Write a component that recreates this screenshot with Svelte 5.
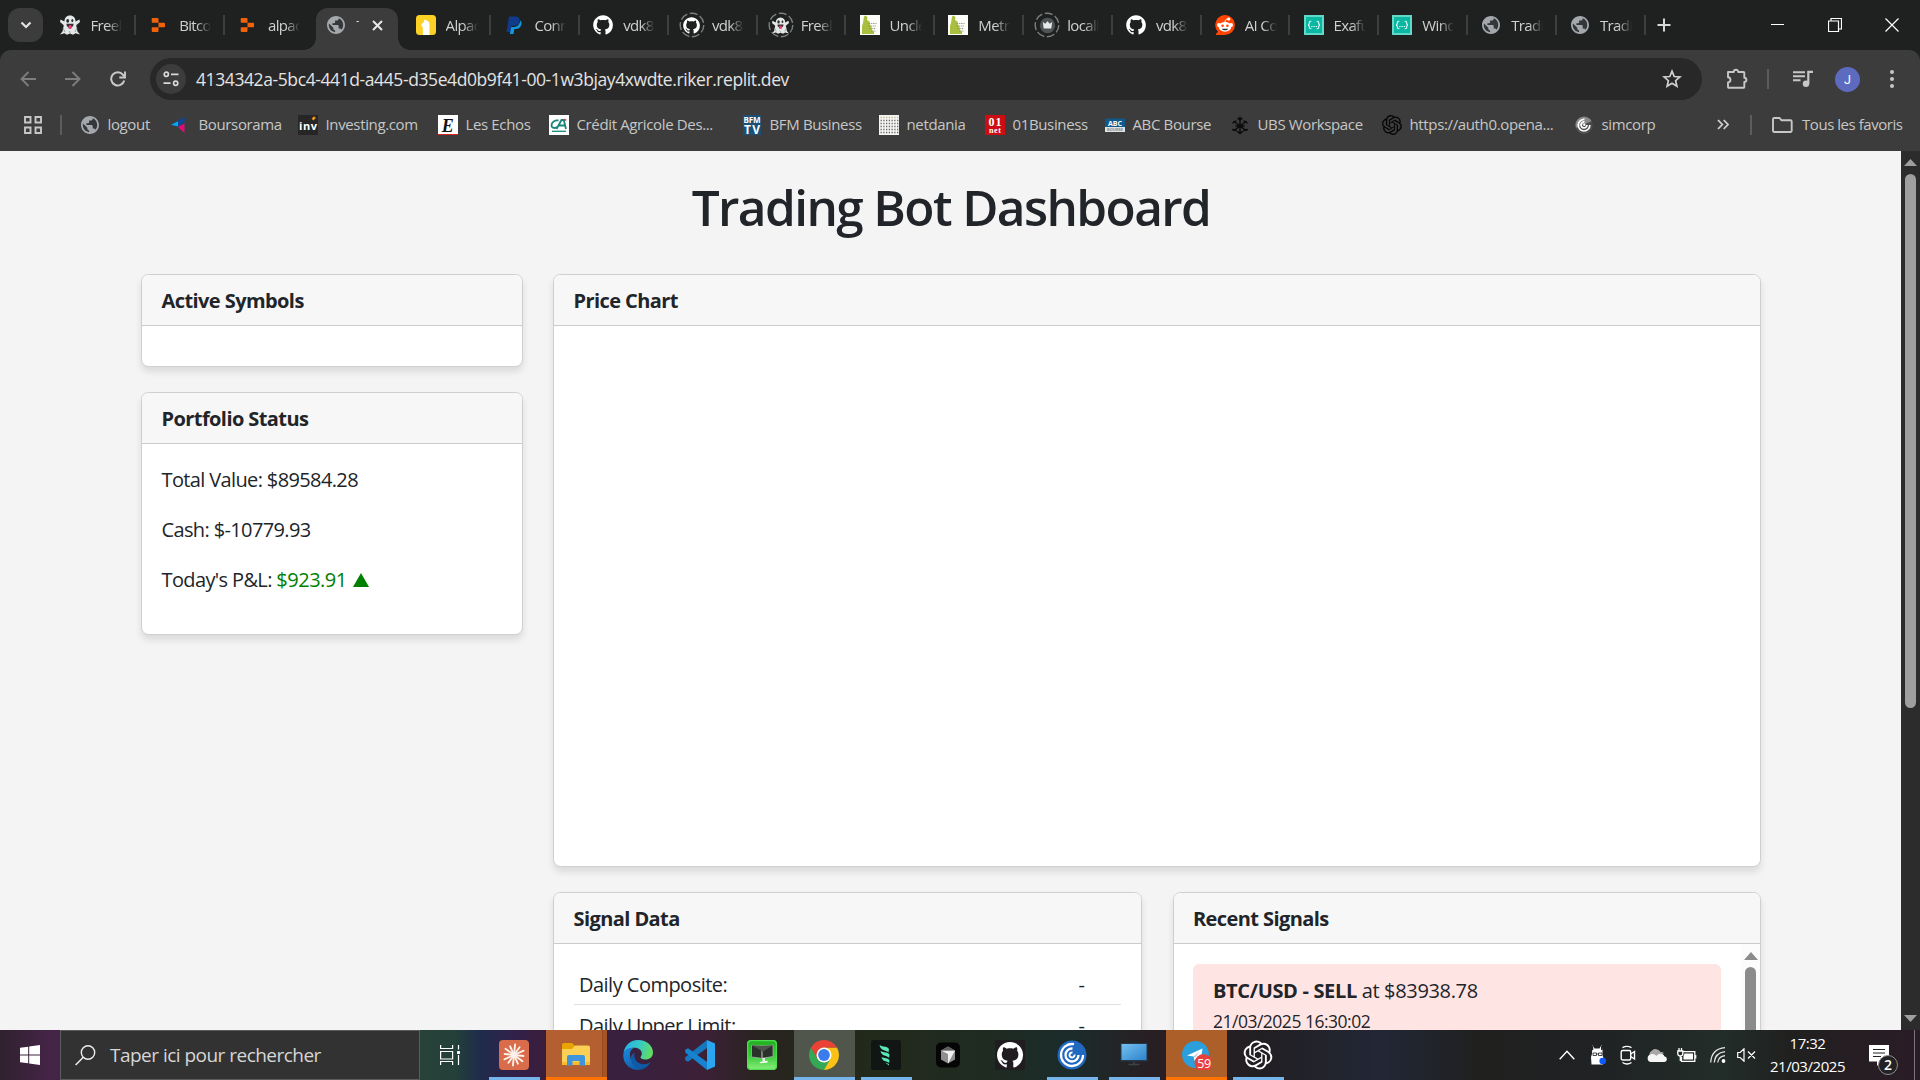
<script>
  const tabs = [
    { icon: 'ghost', label: 'Freela' },
    { icon: 'replit', label: 'Bitcoi' },
    { icon: 'replit', label: 'alpaca' },
    { icon: 'globe', label: 'T', active: true },
    { icon: 'alpaca', label: 'Alpac' },
    { icon: 'paypal', label: 'Conne' },
    { icon: 'github', label: 'vdk88' },
    { icon: 'github', label: 'vdk88', ring: true },
    { icon: 'ghost', label: 'Freela', ring: true },
    { icon: 'statue', label: 'Uncle' },
    { icon: 'statue', label: 'Metro' },
    { icon: 'crown', label: 'locall', ring: true },
    { icon: 'github', label: 'vdk88' },
    { icon: 'reddit', label: 'AI Co' },
    { icon: 'braces', label: 'Exafu' },
    { icon: 'braces', label: 'Windo' },
    { icon: 'globe', label: 'Tradin' },
    { icon: 'globe', label: 'Tradi' }
  ];

  // w: distance from one bookmark's icon to the next one's
  const bookmarks = [
    { icon: 'globe', label: 'logout', w: 91 },
    { icon: 'bourso', label: 'Boursorama', w: 127 },
    { icon: 'inv', label: 'Investing.com', w: 140 },
    { icon: 'echos', label: 'Les Echos', w: 111 },
    { icon: 'ca', label: 'Crédit Agricole Des...', w: 193 },
    { icon: 'bfm', label: 'BFM Business', w: 137 },
    { icon: 'dots', label: 'netdania', w: 106 },
    { icon: 'net01', label: '01Business', w: 120 },
    { icon: 'abc', label: 'ABC Bourse', w: 125 },
    { icon: 'ubs', label: 'UBS Workspace', w: 152 },
    { icon: 'openai', label: 'https://auth0.opena...', w: 192 },
    { icon: 'citrixgray', label: 'simcorp', w: 90 }
  ];

  const tasks = [
    { icon: 'claude', open: true },
    { icon: 'folder', alert: true, stacked: true },
    { icon: 'edge' },
    { icon: 'vscode' },
    { icon: 'remote' },
    { icon: 'chrome', current: true },
    { icon: 'feather', open: true },
    { icon: 'cursor' },
    { icon: 'githubdesk' },
    { icon: 'citrix', open: true },
    { icon: 'monitor', open: true },
    { icon: 'telegram', alert: true },
    { icon: 'openaiw', open: true }
  ];

  const signalRows = [
    { name: 'Daily Composite:', value: '-' },
    { name: 'Daily Upper Limit:', value: '-' }
  ];
</script>

{#snippet githubMark()}
  <path d="M8 0C3.58 0 0 3.58 0 8c0 3.54 2.29 6.53 5.47 7.59.4.07.55-.17.55-.38 0-.19-.01-.82-.01-1.49-2.01.37-2.53-.49-2.69-.94-.09-.23-.48-.94-.82-1.13-.28-.15-.68-.52-.01-.53.63-.01 1.08.58 1.23.82.72 1.21 1.87.87 2.33.66.07-.52.28-.87.51-1.07-1.78-.2-3.64-.89-3.64-3.95 0-.87.31-1.59.82-2.15-.08-.2-.36-1.02.08-2.12 0 0 .67-.21 2.2.82.64-.18 1.32-.27 2-.27.68 0 1.36.09 2 .27 1.53-1.04 2.2-.82 2.2-.82.44 1.1.16 1.92.08 2.12.51.56.82 1.27.82 2.15 0 3.07-1.87 3.75-3.65 3.95.29.25.54.73.54 1.48 0 1.07-.01 1.93-.01 2.2 0 .21.15.46.55.38A8.01 8.01 0 0 0 16 8c0-4.42-3.58-8-8-8z" />
{/snippet}

{#snippet openaiMark()}
  <path d="M22.2819 9.8211a5.9847 5.9847 0 0 0-.5157-4.9108 6.0462 6.0462 0 0 0-6.5098-2.9A6.0651 6.0651 0 0 0 4.9807 4.1818a5.9847 5.9847 0 0 0-3.9977 2.9 6.0462 6.0462 0 0 0 .7427 7.0966 5.98 5.98 0 0 0 .511 4.9107 6.051 6.051 0 0 0 6.5146 2.9001A5.9847 5.9847 0 0 0 13.2599 24a6.0557 6.0557 0 0 0 5.7718-4.2058 5.9894 5.9894 0 0 0 3.9977-2.9001 6.0557 6.0557 0 0 0-.7475-7.0729zm-9.022 12.6081a4.4755 4.4755 0 0 1-2.8764-1.0408l.1419-.0804 4.7783-2.7582a.7948.7948 0 0 0 .3927-.6813v-6.7369l2.02 1.1686a.071.071 0 0 1 .038.052v5.5826a4.504 4.504 0 0 1-4.4945 4.4944zm-9.6607-4.1254a4.4708 4.4708 0 0 1-.5346-3.0137l.142.0852 4.783 2.7582a.7712.7712 0 0 0 .7806 0l5.8428-3.3685v2.3324a.0804.0804 0 0 1-.0332.0615L9.74 19.9502a4.4992 4.4992 0 0 1-6.1408-1.6464zM2.3408 7.8956a4.485 4.485 0 0 1 2.3655-1.9728V11.6a.7664.7664 0 0 0 .3879.6765l5.8144 3.3543-2.0201 1.1685a.0757.0757 0 0 1-.071 0l-4.8303-2.7865A4.504 4.504 0 0 1 2.3408 7.872zm16.5963 3.8558L13.1038 8.364 15.1192 7.2a.0757.0757 0 0 1 .071 0l4.8303 2.7913a4.4944 4.4944 0 0 1-.6765 8.1042v-5.6772a.79.79 0 0 0-.407-.667zm2.0107-3.0231l-.142-.0852-4.7735-2.7818a.7759.7759 0 0 0-.7854 0L9.409 9.2297V6.8974a.0662.0662 0 0 1 .0284-.0615l4.8303-2.7866a4.4992 4.4992 0 0 1 6.6802 4.66zM8.3065 12.863l-2.02-1.1638a.0804.0804 0 0 1-.038-.0567V6.0742a4.4992 4.4992 0 0 1 7.3757-3.4537l-.142.0805L8.704 5.459a.7948.7948 0 0 0-.3927.6813zm1.0976-2.3654l2.602-1.4998 2.6069 1.4998v2.9994l-2.5974 1.4997-2.6067-1.4997Z" />
{/snippet}

{#snippet small(name)}
  <svg class="fav" viewBox="0 0 20 20" width="20" height="20">
    {#if name === 'ghost'}
      <path d="M10 .5c-3.600 0-5.500 2.600-5.600 6L.6 4.500 0 7l3.800 3.300-1.300 6.200L0 19.500l4.500-1.200 2.500 1.500 3-1.300 3 1.300 2.500-1.500 4.500 1.200-2.500-3-1.300-6.200L20 7l-.6-2.500-3.800 2C15.500 3.100 13.600.5 10 .5z" fill="#e4e7e7" />
      <ellipse cx="7.700" cy="5.800" rx="1.400" ry="1.900" fill="#252827" />
      <ellipse cx="12.300" cy="5.600" rx="1" ry="1.500" fill="#252827" />
      <path d="M6.500 8.800h7c0 2.300-.9 3.200-1.800 3.200 0 2.300-3.400 2.300-3.400 0-1 0-1.800-1-1.800-3.200z" fill="#3b2a2e" />
      <rect x="8.600" y="10" width="3" height="4" rx="1.500" fill="#e8447c" />
      <path d="M3 13l2 4m12-4l-2 4M9.500 16l.5 2" stroke="#9aa3a3" />
    {:else if name === 'replit'}
      <path d="M3.500 3h5a1 1 0 0 1 1 1v3.700h-6a.8.8 0 0 1-.8-.8V3.800a.8.8 0 0 1 .8-.8zM9.500 7.700h5.700a.8.8 0 0 1 .8.8v3a.8.8 0 0 1-.8.8H9.500zM3.500 12.300h6v3.600a1 1 0 0 1-1 1h-5a.8.8 0 0 1-.8-.8v-3a.8.8 0 0 1 .8-.8z" fill="#f26207" />
    {:else if name === 'globe'}
      <circle cx="10" cy="10" r="7" fill="#33373a" />
      <path transform="translate(-.8 -.8) scale(.9)" fill="#a4a8ad" d="M12 2C6.480 2 2 6.480 2 12s4.480 10 10 10 10-4.480 10-10S17.520 2 12 2zm-1 17.930c-3.950-.49-7-3.850-7-7.930 0-.62.08-1.210.21-1.790L9 15v1c0 1.100.9 2 2 2v1.930zm6.900-2.540c-.26-.81-1-1.390-1.900-1.390h-1v-3c0-.55-.45-1-1-1H8v-2h2c.55 0 1-.45 1-1V7h2c1.100 0 2-.9 2-2v-.41c2.930 1.190 5 4.060 5 7.410 0 2.080-.8 3.970-2.100 5.390z" />
    {:else if name === 'alpaca'}
      <rect width="20" height="20" rx="3.500" fill="#fbd124" />
      <path d="M6.800 20V12c-1.400-.3-1.800-1.600-1.200-2.700L8 6.700V4.500l1 .8 1-.9.500 1c2 .4 3 1.700 3 4V20z" fill="#fff" />
    {:else if name === 'paypal'}
      <path d="M5 1.500h6.500c3.300 0 4.700 1.800 4 4.800-.8 3.300-3 4.700-6 4.700H7.700L6.600 17H2.500z" fill="#103a8a" />
      <path d="M16.300 5.500c1.300 1 1.500 2.500 1 4.200-.8 3-2.800 4.300-5.600 4.300h-1.300L9.500 19H5.800l1.500-7h2.500c3.500 0 5.800-2.500 6.500-6.500z" fill="#1596dc" />
    {:else if name === 'github'}
      <g transform="translate(.2 .2) scale(1.230)" fill="#fff">{@render githubMark()}</g>
    {:else if name === 'statue'}
      <rect width="20" height="20" fill="#fdfdfa" />
      <path d="M4 1.500l2-1 1.500 2-.5 2.500 2.500 1.500.5 3 1.500 2.500.5 3 2 2V19H2V11l1-3z" fill="#a9bf3d" />
      <path d="M8.500 8.500h8M8.500 11h7.500M9 13.500h7M11 16h5" stroke="#8c9378" stroke-width=".9" stroke-dasharray="1.500 .8" />
    {:else if name === 'crown'}
      <circle cx="10" cy="10" r="9" fill="#505353" />
      <path d="M4.500 6l2.800 2L10 5l2.700 3 2.800-2-1 7.500H5.500z" fill="#e9e9e9" />
    {:else if name === 'reddit'}
      <path d="M10 0a10 10 0 1 1 0 20H1.500a.7.700 0 0 1-.5-1.200l2-2A10 10 0 0 1 10 0z" fill="#ff4500" />
      <circle cx="13.700" cy="4" r="1.600" fill="#fff" />
      <path d="M10 7c.2-2 1-3 2.800-2.800" stroke="#fff" fill="none" />
      <circle cx="3.900" cy="10" r="1.900" fill="#fff" /><circle cx="16.100" cy="10" r="1.900" fill="#fff" />
      <ellipse cx="10" cy="11.800" rx="6.300" ry="4.900" fill="#fff" />
      <circle cx="7.600" cy="10.800" r="1.300" fill="#ff4500" /><circle cx="12.400" cy="10.800" r="1.300" fill="#ff4500" />
      <path d="M7 13.700h6c-.6 2-5.400 2-6 0z" fill="#24323a" />
    {:else if name === 'braces'}
      <rect width="20" height="20" fill="#62d8c6" />
      <rect x="2" y="2" width="16" height="16" fill="#0bb6a3" />
      <path d="M7.300 6.200c-1.600 0-2 .4-2 1.600 0 1.300-.2 2-1.200 2.200 1 .2 1.200.9 1.200 2.200 0 1.200.4 1.600 2 1.600M12.700 6.200c1.600 0 2 .4 2 1.600 0 1.300.2 2 1.200 2.200-1 .2-1.200.9-1.200 2.200 0 1.200-.4 1.600-2 1.600" fill="none" stroke="#f3fffc" stroke-width="1.100" />
      <path d="M7.300 11.500h5.800" stroke="#f3fffc" stroke-width="1.100" stroke-dasharray="1.200 1" />
    {:else if name === 'bourso'}
      <path d="M0 9.700L13.500 2v5l-7 5z" fill="#0d4698" /><path d="M0 9.700L7 6.200V11.500z" fill="#08a6e4" />
      <path d="M7 12l6.500-3.500V18z" fill="#e6097b" />
    {:else if name === 'inv'}
      <rect width="20" height="20" fill="#262626" />
      <path d="M14.500 4.500l2.500-2.300" stroke="#f7981c" stroke-width="2.500" />
      <text x="10" y="14.500" class="t-inv" textLength="18">inv</text>
    {:else if name === 'echos'}
      <rect width="20" height="20" fill="#fff" /><rect y="19" width="20" height="1" fill="#d22" />
      <text x="9.700" y="16.500" class="t-echos">E</text>
    {:else if name === 'ca'}
      <rect width="20" height="20" fill="#fff" />
      <path d="M9.500 5.500C6 4.800 2.500 7 2.500 10.200c0 3 3.500 3.600 6.200 1.600M7.500 14l5-9h2.300l2.200 9M9 10.500h7" fill="none" stroke="#16867c" stroke-width="1.800" />
      <path d="M15 3.500l3 1.500-2 1z" fill="#e22" /><path d="M3 16.300h14" stroke="#16867c" stroke-width="1.300" />
    {:else if name === 'bfm'}
      <rect x="1" width="18" height="20" fill="#1c4f75" />
      <text x="10" y="7.500" class="t-bfm" textLength="17">BFM</text>
      <text x="10" y="18.500" class="t-tv" textLength="16">TV</text>
    {:else if name === 'dots'}
      <rect width="20" height="20" fill="#f5f5f3" />
      {#each [2.500, 5.500, 8.500, 11.500, 14.500, 17.500] as y}
        <path d="M1.500 {y}h18" stroke={y < 4 ? '#c9b79a' : '#6a6a6a'} stroke-width="1.300" stroke-dasharray="1.300 1.450" />
      {/each}
    {:else if name === 'net01'}
      <rect width="20" height="20" fill="#cc0d14" />
      <text x="10" y="11" class="t-01" textLength="13">01</text>
      <text x="10" y="17.500" class="t-net" textLength="12">net</text>
    {:else if name === 'abc'}
      <rect y="3.500" width="20" height="8.500" fill="#10598c" /><rect y="12" width="20" height="5" fill="#dfe3e6" />
      <text x="10" y="10.500" class="t-abc" textLength="14">ABC</text>
      <text x="10" y="16" class="t-bourse" textLength="16">BOURSE</text>
    {:else if name === 'ubs'}
      <g stroke="#0c0c0c" stroke-width="1.500" fill="none" stroke-linecap="round">
        <path d="M10 2v16M4 6.500l12 9M16 6.500l-12 9M3 8l3-2M17 8l-3-2M8 3.500l2 1.500 2-1.500M2.500 14.500l3.500 1M17.500 14.500l-3.500 1M7.500 16.500l2.500 2 2.500-2M6 11h8" />
      </g>
    {:else if name === 'openai'}
      <g transform="scale(.83)" fill="#050505">{@render openaiMark()}</g>
    {:else if name === 'citrixgray'}
      <circle cx="10" cy="10" r="8.600" fill="#8a8a8a" /><path d="M2 13a8.600 8.600 0 1 0 16-7z" fill="#222" opacity=".6" />
      <path d="M15.800 10a5.800 5.800 0 1 1-5.300-5.600M13 10a3 3 0 1 1-2.500-3" fill="none" stroke="#fff" stroke-width="1.700" />
      <circle cx="10.300" cy="9.800" r="1.200" fill="#fff" />
    {/if}
  </svg>
{/snippet}

{#snippet task(name)}
  <svg viewBox="0 0 30 30" width="30" height="30">
    {#if name === 'claude'}
      <rect width="30" height="30" rx="4" fill="#d96c4a" />
      <g stroke="#fbf1ea" stroke-width="1.900" stroke-linecap="round">
        {#each [0, 30, 60, 90, 120, 150, 180, 210, 240, 270, 300, 330] as a}
          <path d="M15 15V{a % 60 ? 5.500 : 4.500}" transform="rotate({a + 6} 15 15)" />
        {/each}
      </g>
    {:else if name === 'folder'}
      <path d="M1 5a2 2 0 0 1 2-2h8l3 3v4H1z" fill="#e8a400" />
      <path d="M1 9h10l3-3.500h13a2 2 0 0 1 2 2V25H3a2 2 0 0 1-2-2z" fill="#fcd055" />
      <path d="M1 22h28v3H1z" fill="#f5bd2c" />
      <path d="M6 25.500V17a2 2 0 0 1 2-2h14a2 2 0 0 1 2 2v8.500h-5.500V21h-7v4.500z" fill="#3f95dd" />
    {:else if name === 'edge'}
      <defs>
        <linearGradient id="edge-top" x1="0" y1=".3" x2="1" y2=".5"><stop offset="0" stop-color="#2aaee8" /><stop offset=".5" stop-color="#35c9c8" /><stop offset="1" stop-color="#64dd5c" /></linearGradient>
        <linearGradient id="edge-low" x1="0" y1="0" x2="1" y2="1"><stop offset="0" stop-color="#1b8be0" /><stop offset="1" stop-color="#0d4a93" /></linearGradient>
      </defs>
      <path d="M.5 14C1 6 7 0 15 0c9 0 15 6 15 12.500 0 4.500-3.500 7-7.500 7-3.500 0-5-1.300-5-2.200 0-.8 1.300-1.300 1.300-3.800 0-3-3-5.700-7-5.700C6 7.800 1.500 10 .5 14z" fill="url(#edge-top)" />
      <path d="M.3 15.500C.3 11 5 7.800 11 7.800c-3 1.500-4.500 4.500-4 8.200.8 5.500 5 9.500 10.500 9.500 3.800 0 7-1 9.500-3-2 4.500-6.500 7.500-12 7.500C6.500 30 .3 23.500.3 15.500z" fill="url(#edge-low)" />
      <path d="M11.500 13c-1 4 1 9.500 7 11 3.500.8 6.500 0 9-2-2.500 5-8 7.500-13 6C9.500 26 7 21 8 16.500c.5-2 2-3 3.500-3.500z" fill="#0f5aa6" />
    {:else if name === 'vscode'}
      <path d="M22 0v8L3 21.800.2 20.300v-3z" fill="#1577bd" />
      <path d="M.2 9.700L3 8.200 22 22v8L.2 12.500z" fill="#1583cf" />
      <path d="M22 0l8 3.500v23L22 30z" fill="#2aa5f2" />
    {:else if name === 'remote'}
      <defs><linearGradient id="rm" x1="0" y1="0" x2="0" y2="1"><stop offset="0" stop-color="#1fae1f" /><stop offset=".5" stop-color="#35c635" /><stop offset="1" stop-color="#8af07e" /></linearGradient></defs>
      <rect width="30" height="30" rx="4" fill="url(#rm)" /><rect x=".7" y=".7" width="28.600" height="28.600" rx="3.500" fill="none" stroke="#4fe052" stroke-width="1.200" />
      <path d="M4.500 5.200l10.500.8v12.300L4.500 17zM15 6l11-.8V16.500l-11 1.800z" fill="#2b302b" stroke="#aeb8ad" stroke-width=".7" /><path d="M4.500 5.200l10.500.8v5zM15 6l11-.8-11 7z" fill="#4c524c" />
      <path d="M16.700 18v3" stroke="#e9efe8" stroke-width="2.500" /><path d="M12.500 22l8-1.300v1.800l-7 .7z" fill="#fff" />
    {:else if name === 'chrome'}
      <path d="M15 15V7.500h12.990A15 15 0 0 1 15 30z" fill="#fbc116" />
      <path d="M15 30A15 15 0 0 1 2.010 7.500L8.500 18.750 15 22.500l6.500-3.750z" fill="#34a853" />
      <path d="M2.010 7.500A15 15 0 0 1 27.990 7.500H15l-6.500 11.250z" fill="#ea4335" />
      <circle cx="15" cy="15" r="7.500" fill="#fff" /><circle cx="15" cy="15" r="5.900" fill="#3a7cec" />
    {:else if name === 'feather'}
      <rect width="30" height="30" rx="2.500" fill="#111514" />
      <g fill="#59e6b8"><path d="M8.500 5c4 2.500 7 .5 9.500 4l-.5 3.500C14.500 9.500 9.500 11 8.500 5zM9.500 11c3.500 2 6.500.5 9 3.500l-.3 3.300c-3-2.800-7.700-1.300-8.700-6.800zM10.500 17c3 1.500 5.500.5 8 3l-.3 3c-2.800-2.200-6.900-1.300-7.700-6zM14 22.500l4 1.500v1.500z" /></g>
    {:else if name === 'cursor'}
      <rect x="3" y="2.500" width="24" height="25" rx="5" fill="#050505" />
      <path d="M15 6.500l7 4v9l-7 4-7-4v-9z" fill="#8f8f8f" /><path d="M8 10.500h14L15 23.500V14z" fill="#f1f1f1" /><path d="M15 6.500l7 4H8z" fill="#5e5e5e" />
    {:else if name === 'githubdesk'}
      <rect width="30" height="30" fill="#211c20" /><g transform="translate(2 2) scale(1.630)" fill="#fff">{@render githubMark()}</g>
    {:else if name === 'citrix'}
      <circle cx="15" cy="15" r="14.500" fill="#2168c0" />
      <path d="M26 15a11 11 0 1 1-9-10.800M21.500 15a6.500 6.500 0 1 1-6-6.500" fill="none" stroke="#fff" stroke-width="2.300" />
      <path d="M17.500 14.500a2.500 2.500 0 1 1-2-2" fill="none" stroke="#fff" stroke-width="2" />
    {:else if name === 'monitor'}
      <defs><linearGradient id="mon" x1="0" y1="0" x2="1" y2="1"><stop offset="0" stop-color="#74c0f0" /><stop offset="1" stop-color="#2d83cc" /></linearGradient></defs>
      <rect x="1.500" y="3" width="27" height="18.500" fill="#24384a" /><rect x="2.500" y="4" width="25" height="16" fill="url(#mon)" />
      <path d="M15 21.500v2.500M9.500 24.500h11" stroke="#3c4449" stroke-width="1.500" />
    {:else if name === 'telegram'}
      <circle cx="14.500" cy="14.500" r="13.500" fill="#2a9fdb" />
      <path d="M6 15.500L21.500 8.500l-2 13-4-3-2 2.500-.8-4.500z" fill="#fff" /><path d="M12.700 16.500l5.500-4.800-4 6z" fill="#a9cfe6" />
      <circle cx="22.500" cy="23" r="9" fill="#e8413c" />
    {:else if name === 'openaiw'}
      <g transform="translate(.6 .6) scale(1.200)" fill="#fff">{@render openaiMark()}</g>
    {/if}
  </svg>
{/snippet}

<div class="screen">
  <div class="tabstrip">
    <div class="dropdown"><svg width="12" height="8" viewBox="0 0 12 8"><path d="M1.500 1.500L6 6l4.500-4.500" fill="none" stroke="#e3e3e3" stroke-width="2.200" /></svg></div>
    <div class="tabs">
      {#each tabs as tab, i}
        <div class="tab" class:active={tab.active} class:nosep={i === 2}>
          <span class="favwrap" class:ring={tab.ring}>
            {@render small(tab.icon)}
            {#if tab.ring}
              <svg class="halo" viewBox="0 0 26 26" width="26" height="26"><circle cx="13" cy="13" r="11.800" fill="none" stroke="#7c7f7f" stroke-width="1.400" stroke-dasharray="8 2.590" /></svg>
            {/if}
          </span>
          <span class="tablabel">{tab.label}</span>
          {#if tab.active}
            <svg width="11" height="11" viewBox="0 0 11 11"><path d="M1 1l9 9M10 1l-9 9" stroke="#e8e8e8" stroke-width="2" /></svg>
          {/if}
        </div>
      {/each}
    </div>
    <svg class="plus" width="14" height="14" viewBox="0 0 14 14"><path d="M7 .5v13M.5 7h13" stroke="#d8d8d8" stroke-width="2" /></svg>
    <div class="winctl">
      <svg width="14" height="14" viewBox="0 0 14 14"><path d="M0 6.500h13" stroke="#fff" /></svg>
      <svg width="14" height="14" viewBox="0 0 14 14"><path d="M.5 3h10v10.500H.5zM3 3V.5h10.500V11h-3" fill="none" stroke="#fff" stroke-width="1.200" /></svg>
      <svg width="14" height="14" viewBox="0 0 14 14"><path d="M.5.5l13 13M13.500.5l-13 13" stroke="#fff" stroke-width="1.200" /></svg>
    </div>
  </div>

  <div class="chrome">
    <div class="navrow">
      <div class="navbtns">
        <svg width="16" height="16" viewBox="0 0 16 16"><path d="M16 8H1.500M8.500 1L1.500 8l7 7" fill="none" stroke="#7d7d7d" stroke-width="1.900" /></svg>
        <svg width="16" height="16" viewBox="0 0 16 16"><path d="M0 8h14.500M7.500 1l7 7-7 7" fill="none" stroke="#7d7d7d" stroke-width="1.900" /></svg>
        <svg width="16" height="16" viewBox="0 0 16 16"><path d="M14.200 9.500A6.600 6.600 0 1 1 13 3.800L14.600 5.500" fill="none" stroke="#c9c9c9" stroke-width="2" /><path d="M15 .5v6H9.300" fill="none" stroke="#c9c9c9" stroke-width="1.900" /></svg>
      </div>
      <div class="omnibox">
        <span class="siteinfo">
          <svg width="16" height="16" viewBox="0 0 16 16" fill="none" stroke="#d8d8d8" stroke-width="1.700"><circle cx="3.300" cy="3.300" r="2.100" /><path d="M8 3.300h7.500M.5 12.200h7" /><circle cx="12.700" cy="12.200" r="2.100" /></svg>
        </span>
        <span class="url">4134342a-5bc4-441d-a445-d35e4d0b9f41-00-1w3bjay4xwdte.riker.replit.dev</span>
        <svg class="star" width="20" height="20" viewBox="0 0 20 20"><path d="M10 2.200l2.200 5.300 5.700.5-4.300 3.700 1.300 5.600L10 14.300l-4.900 3 1.300-5.600L2.100 8l5.700-.5z" fill="none" stroke="#d0d0d0" stroke-width="1.700" /></svg>
      </div>
      <svg class="puzzle" width="22" height="22" viewBox="0 0 22 22"><path d="M2 4h5.800a2.200 2.200 0 0 1 4.400 0h5.300a.8.8 0 0 1 .8.8v5a2.100 2.100 0 0 1 0 4.200v5a.8.8 0 0 1-.8.8H2.800a.8.8 0 0 1-.8-.8v-4.500c3.300-.3 3.300-5 0-5.300z" fill="none" stroke="#c7c7c7" stroke-width="1.900" stroke-linejoin="round" /></svg>
      <span class="vsep"></span>
      <svg class="music" width="20" height="18" viewBox="0 0 20 18"><path d="M0 2.200h12M0 6.200h12M0 10.200h7.500" stroke="#c7c7c7" stroke-width="1.900" /><path d="M15.300 14V1.800H20" fill="none" stroke="#c7c7c7" stroke-width="2.200" /><circle cx="13" cy="13.700" r="3.200" fill="#c7c7c7" /></svg>
      <span class="avatar">J</span>
      <svg class="menu" width="4" height="18" viewBox="0 0 4 18" fill="#c7c7c7"><circle cx="2" cy="2" r="2" /><circle cx="2" cy="9" r="2" /><circle cx="2" cy="16" r="2" /></svg>
    </div>
    <div class="bookmarks">
      <svg class="apps" width="18" height="18" viewBox="0 0 18 18"><path d="M1 1h5.500v5.500H1zM11.500 1H17v5.500h-5.500zM1 11.500h5.500V17H1zM11.500 11.500H17V17h-5.500z" fill="none" stroke="#c7c7c7" stroke-width="1.900" /></svg>
      <span class="vsep"></span>
      <div class="bmlist">
        {#each bookmarks as b}
          <span class="bm" style:width="{b.w}px">{@render small(b.icon)}<span>{b.label}</span></span>
        {/each}
      </div>
      <svg class="more" width="12" height="11" viewBox="0 0 12 11"><path d="M1 1l4.300 4.500L1 10M6.700 1L11 5.500 6.700 10" fill="none" stroke="#cfcfcf" stroke-width="1.800" /></svg>
      <span class="vsep"></span>
      <svg class="fold" width="21" height="16" viewBox="0 0 21 16"><path d="M1 2.200A1.200 1.200 0 0 1 2.200 1h5.300l2 2.300h9a1.200 1.200 0 0 1 1.200 1.200v9.300a1.200 1.200 0 0 1-1.200 1.200H2.200A1.200 1.200 0 0 1 1 13.800z" fill="none" stroke="#c7c7c7" stroke-width="1.900" /></svg>
      <span class="allfav">Tous les favoris</span>
    </div>
  </div>

  <div class="viewport">
    <main>
      <h1>Trading Bot Dashboard</h1>
      <div class="cols">
        <div class="left">
          <section class="card">
            <header>Active Symbols</header>
            <div class="empty"></div>
          </section>
          <section class="card portfolio">
            <header>Portfolio Status</header>
            <div class="stats">
              <p>Total Value: $89584.28</p>
              <p>Cash: $-10779.93</p>
              <p>Today's P&amp;L: <span class="gain">$923.91 <svg width="16" height="14" viewBox="0 0 16 14"><path d="M8 0l8 14H0z" fill="#008000" /></svg></span></p>
            </div>
          </section>
        </div>
        <div class="right">
          <section class="card chart"><header>Price Chart</header></section>
          <div class="pair">
            <section class="card">
              <header>Signal Data</header>
              <div class="rows">
                {#each signalRows as r}
                  <div class="row"><span>{r.name}</span><span>{r.value}</span></div>
                {/each}
              </div>
            </section>
            <section class="card">
              <header>Recent Signals</header>
              <div class="scroller">
                <div class="signals">
                  <article><div><b>BTC/USD - SELL</b> at $83938.78</div><small>21/03/2025 16:30:02</small></article>
                </div>
                <div class="innerbar">
                  <svg width="14" height="8" viewBox="0 0 14 8"><path d="M7 0l7 8H0z" fill="#8b8b8b" /></svg>
                  <span></span>
                </div>
              </div>
            </section>
          </div>
        </div>
      </div>
    </main>
    <div class="pagebar">
      <svg width="13" height="7" viewBox="0 0 13 7"><path d="M6.500 0L13 7H0z" fill="#9f9f9f" /></svg>
      <span></span>
      <svg width="13" height="7" viewBox="0 0 13 7"><path d="M0 0h13L6.500 7z" fill="#9f9f9f" /></svg>
    </div>
  </div>

  <footer class="taskbar">
    <div class="start"><svg width="20" height="20" viewBox="0 0 20 20" fill="#fff"><path d="M0 2.800l8.200-1.100v7.800H0zM9.200 1.500L20 0v9.500H9.200zM0 10.500h8.200v7.800L0 17.200zM9.200 10.500H20V20L9.200 18.500z" /></svg></div>
    <div class="search">
      <svg width="21" height="21" viewBox="0 0 21 21"><circle cx="13" cy="7.500" r="6.700" fill="none" stroke="#eee" stroke-width="1.400" /><path d="M8.300 12.300L.6 20" stroke="#eee" stroke-width="1.500" /></svg>
      <span>Taper ici pour rechercher</span>
    </div>
    <div class="taskview"><svg width="20" height="20" viewBox="0 0 20 20" fill="none" stroke="#fff" stroke-width="1.200"><path d="M.6 0v3.500h12V0M.6 20v-3.500h12V20M.6 6.500h12v7.500H.6zM18.500 0v4.500M18.500 10v10" /><path d="M18.500 6v3" stroke-width="2.800" /></svg></div>
    <div class="tasks">
      {#each tasks as t}
        <div class="task" class:open={t.open} class:alert={t.alert} class:stacked={t.stacked} class:current={t.current}>
          {@render task(t.icon)}
          {#if t.icon === 'telegram'}<span class="count">59</span>{/if}
        </div>
      {/each}
    </div>
    <div class="tray">
      <svg width="16" height="10" viewBox="0 0 16 10"><path d="M.7 9.200L8 1.200l7.300 8" fill="none" stroke="#fff" stroke-width="1.400" /></svg>
      <svg class="llama" width="16" height="20" viewBox="0 0 16 20"><path d="M2.500 0l2 3.500h5L11.500 0l1 5v5l1 3-.5 6.500H1.500L1 12l1-3z" fill="#fff" /><path d="M2.500 1v4M11.800 1v4" stroke="#222" stroke-width="1.500" /><path d="M3 8h3.500v2.500H3zM8.500 8H12v2.500H8.500zM6.500 9h2" stroke="#333" fill="none" stroke-width=".9" /><circle cx="12.700" cy="16" r="3.300" fill="#0d5bff" /></svg>
      <svg class="meet" width="16" height="20" viewBox="0 0 16 20" fill="none" stroke="#fff" stroke-width="1.400"><rect x="1.200" y="5.500" width="9.500" height="9.500" rx="1.500" /><path d="M10.700 9l3.800-2.500v7.500l-3.800-2.500M2.500 2.700Q7 0 11.500 2.700M2.500 17.500Q7 20.500 11.500 17.500" /></svg>
      <svg class="cloud" width="20" height="14" viewBox="0 0 20 14"><path d="M3 9a5 5 0 0 1 2-6.500A5.500 5.500 0 0 1 13.500 4 5 5 0 0 1 17 5L9 10z" fill="#a8a8a8" /><path d="M4 14a3.800 3.800 0 0 1-.3-7.500C6 5.500 8 6.500 9.500 8 12 4.500 17 5.500 17.300 8.300 21 9 20.500 14 17 14z" fill="#f5f5f5" /></svg>
      <svg class="battery" width="20" height="15" viewBox="0 0 20 15"><path d="M5.500 3.700h12.300v9.600H4.500V9" fill="none" stroke="#fff" stroke-width="1.300" /><path d="M7.500 5.500H16v6H6.500V8z" fill="#fff" /><path d="M18.700 7v3.500M2 0v2.500M4.500 0v2.500M.8 3h5v2.500a2.500 2.500 0 0 1-5 0zM3.300 8v5" stroke="#fff" fill="none" stroke-width="1.300" /></svg>
      <svg class="wifi" width="16" height="16" viewBox="0 0 16 16"><g fill="none" stroke="#e8e8e8" stroke-width="1.200"><path d="M.7 15.500Q1.500 2 15 .7M4.200 15.500Q5 6 15 4.700M7.700 15.500Q8.500 9.500 15 8.700" /></g><circle cx="13.500" cy="14" r="1.900" fill="#fff" /></svg>
      <svg class="volume" width="19" height="14" viewBox="0 0 19 14" fill="none" stroke="#fff" stroke-width="1.200"><path d="M.7 4.500h2.500L7 .8v12.400L3.200 9.500H.7zM11 3.500l7 7M18 3.500l-7 7" /></svg>
    </div>
    <div class="clock"><span>17:32</span><span>21/03/2025</span></div>
    <div class="notif">
      <svg width="21" height="21" viewBox="0 0 21 21"><path d="M0 0h20v16.500H12L8 21v-4.500H0z" fill="#fff" /><path d="M4 4.500h12M4 8h12M4 11.500h8" stroke="#222" stroke-width="1.200" /></svg>
      <span>2</span>
    </div>
  </footer>
</div>

<style>
  :global(body) { margin: 0; overflow: hidden; background: #1f2020; }
  .screen { width: 1920px; height: 1080px; display: flex; flex-direction: column; overflow: hidden; font-family: 'Open Sans', 'Noto Sans', sans-serif; background: #1f2121; }
  .screen :global(*) { box-sizing: border-box; }
  svg { display: block; flex: none; }

  .tabstrip { height: 50px; flex: none; display: flex; align-items: center; padding-left: 8px; }
  .dropdown { width: 35px; height: 34px; border-radius: 12px; background: #3c3c3c; display: grid; place-items: center; }
  .tabs { display: flex; height: 50px; margin-left: 3.800px; }
  .tab { position: relative; width: 88.800px; height: 50px; padding-left: 13.600px; display: flex; align-items: center; }
  .tab::after { content: ''; position: absolute; right: -.5px; top: 15px; width: 2px; height: 20px; background: #3c3f3f; }
  .tab.active::after, .tab.nosep::after { display: none; }
  .favwrap { width: 20px; height: 20px; position: relative; flex: none; display: grid; place-items: center; }
  .ring .fav { width: 17px; height: 17px; }
  .halo { position: absolute; left: -3px; top: -3px; }
  .tablabel { margin-left: 10px; width: 32px; overflow: hidden; white-space: nowrap; font-size: 15px; letter-spacing: -.65px; line-height: 22px; color: #d0d0d0; mask-image: linear-gradient(90deg, #000 55%, transparent 100%); }
  .tab.active { width: 82px; height: 42px; margin: 8px 3.800px 0 3px; padding: 0 0 8px 6px; border-radius: 12px 12px 0 0; background: #3c3c3c; }
  .tab.active::before { content: ''; position: absolute; left: -12px; right: -12px; bottom: 0; height: 12px; background: radial-gradient(circle 12px at 0 0, transparent 11.500px, #3c3c3c 12px) 0 0 / 12px 12px no-repeat, radial-gradient(circle 12px at 12px 0, transparent 11.500px, #3c3c3c 12px) 100% 0 / 12px 12px no-repeat; }
  .tab.active .favwrap { margin-left: 4px; }
  .tab.active .favwrap, .tab.active .tablabel { flex: none; }
  .tab.active .tablabel { width: 3px; margin: 0 13px 0 10px; mask-image: none; }
  .plus { margin-left: 12px; }
  .winctl { margin-left: auto; display: flex; gap: 43px; padding-right: 21.500px; }

  .chrome { height: 101px; flex: none; background: #3c3c3c; border-radius: 11px 11px 0 0; }
  .navrow { height: 58px; display: flex; align-items: center; padding-left: 20px; }
  .navbtns { display: flex; gap: 29px; width: 130px; }
  .omnibox { width: 1552px; height: 42px; border-radius: 21px; background: #282828; display: flex; align-items: center; padding: 0 20px 0 6px; }
  .siteinfo { width: 30px; height: 30px; border-radius: 50%; background: #3c3c3c; display: grid; place-items: center; }
  .url { margin-left: 10px; font-size: 17.500px; letter-spacing: -.405px; color: #e3e3e3; white-space: nowrap; line-height: 24px; }
  .star { margin-left: auto; }
  .puzzle { margin-left: 24px; }
  .vsep { width: 2px; height: 20px; background: #5c5c5c; flex: none; }
  .navrow .vsep { margin-left: 19px; }
  .music { margin-left: 24px; }
  .avatar { margin-left: 22px; width: 25px; height: 25px; border-radius: 50%; background: #5c6bc0; color: #fff; font-size: 12.500px; font-family: Roboto, sans-serif; display: grid; place-items: center; }
  .menu { margin-left: 30px; }
  .bookmarks { height: 33px; display: flex; align-items: center; padding-left: 23.500px; font-size: 15px; letter-spacing: -.36px; color: #c7c7c7; white-space: nowrap; }
  .bookmarks .apps + .vsep { margin-left: 18px; }
  .bmlist { display: flex; margin-left: 18.500px; width: 1637px; }
  .bm { display: flex; align-items: center; flex: none; gap: 7.500px; line-height: 20px; }
  .bm > span { margin-top: -1px; }
  .more { margin-left: -.5px; }
  .more + .vsep { margin-left: 21px; }
  .fold { margin-left: 20.500px; }
  .allfav { margin: -1px 0 0 9px; letter-spacing: -.45px; }
  .fav text { text-anchor: middle; fill: #fff; letter-spacing: 0; font-weight: 700; }
  .t-inv { font-size: 11px; }
  .fav .t-echos { font: italic 700 18px 'Liberation Serif', serif; fill: #111; }
  .t-bfm { font-size: 8px; }
  .t-tv { font-size: 12px; }
  .fav .t-01 { font: 700 12px 'Liberation Serif', serif; }
  .fav .t-net { font: 700 8px 'Liberation Serif', serif; }
  .t-abc { font-size: 7px; }
  .fav .t-bourse { font-size: 4px; fill: #888; }

  .viewport { height: 879px; flex: none; display: flex; background: #f4f4f4; overflow: hidden; }
  main { width: 1901px; flex: none; padding: 26px 140px 0 141px; color: #212529; font-size: 20px; }
  h1 { margin: 0 0 37px; font-size: 49.500px; line-height: 60px; font-weight: 600; letter-spacing: -1.600px; text-align: center; white-space: nowrap; }
  .cols { display: flex; gap: 30.500px; }
  .left { width: 381.500px; flex: none; }
  .right { width: 1208px; flex: none; }
  .card { background: #fff; border: 1px solid #cfcfcf; border-radius: 7.500px; box-shadow: 0 5px 7.500px rgba(0, 0, 0, .1); overflow: hidden; margin-bottom: 25px; }
  header { height: 51px; padding: 0 19.500px; background: #f7f7f7; border-bottom: 1px solid #cbcbcb; font-weight: 700; line-height: 52px; letter-spacing: -.58px; }
  .empty { height: 40px; }
  .stats { height: 190px; padding: 20px 19.500px; }
  .stats p { margin: 0 0 20px; line-height: 31px; height: 30px; letter-spacing: -.63px; white-space: nowrap; }
  .gain { color: #008000; letter-spacing: -.5px; }
  .gain svg { display: inline-block; margin-left: 1.500px; }
  .chart { height: 593px; margin-bottom: 25px; }
  .pair { display: grid; grid-template-columns: 588.500px 588.500px; justify-content: space-between; }
  .pair .card { height: 400px; }
  .rows { padding: 20px; }
  .row { display: flex; justify-content: space-between; height: 41px; padding: 5px 36px 5px 5px; line-height: 32px; border-bottom: 1px solid #dee2e6; letter-spacing: -.52px; }
  .scroller { display: flex; height: 349px; }
  .signals { flex: 1; padding: 20px 20px 20px 19.500px; }
  article { height: 90px; padding: 11px 20px; border-radius: 6px; background: #ffe4e4; letter-spacing: -.34px; line-height: 32px; }
  article small { display: block; font-size: 17.500px; line-height: 28px; letter-spacing: -.5px; }
  .innerbar { width: 19px; background: #fcfcfc; display: flex; flex-direction: column; align-items: center; padding-top: 8px; }
  .innerbar span { width: 11px; height: 200px; margin-top: 7px; border-radius: 6px; background: #8b8b8b; }
  .pagebar { width: 19px; background: #2c2c2c; display: flex; flex-direction: column; align-items: center; padding: 8px 0 8px; }
  .pagebar span { width: 11px; height: 534px; margin: 8px 0 auto; border-radius: 6px; background: #9f9f9f; }

  .taskbar { height: 50px; flex: none; display: flex; background: linear-gradient(90deg, #2f222e 0, #452447 50px, #28423a 420px, #234039 455px, #1f2c4c 480px, #32204a 515px, #3b1d3a 545px, #38203f 620px, #3d2038 700px, #28241f 760px, #222a1b 870px, #1f2b22 990px, #1b2c2b 1070px, #281f23 1150px, #221f22 1260px, #222736 1380px, #20201f 1480px, #202224 1600px, #222d29 1720px, #20201f 1790px, #2a1c26 1910px); }
  .start { width: 60px; display: grid; place-items: center; }
  .search { width: 360px; background: #323232; border: 1px solid #5c5c5c; display: flex; align-items: center; padding-left: 14px; }
  .search span { margin-left: 14px; font-size: 19px; letter-spacing: -.52px; color: #d6d6d6; white-space: nowrap; }
  .taskview { width: 63px; padding-left: 20px; display: flex; align-items: center; }
  .tasks { display: flex; }
  .task { width: 62px; position: relative; display: grid; place-items: center; }
  .task::after { content: ''; position: absolute; left: 6px; right: 5px; bottom: 0; height: 3px; }
  .open::after, .current::after { background: #76b5eb; }
  .current { background: linear-gradient(#50564b, #50564b) 1px 0 / 61px 100% no-repeat; }
  .alert { background: linear-gradient(#ad5f2a, #ad5f2a) 1px 0 / 61px 100% no-repeat; }
  .stacked { background: linear-gradient(90deg, #b35f31 56px, #8a4626 56px, #a65425 57px) 1px 0 / 61px 100% no-repeat; }
  .current::after, .alert::after { left: 1px; right: 0; }
  .alert::after { background: #ff7300; }
  .count { position: absolute; left: 29px; top: 24px; width: 20px; text-align: center; line-height: 20px; font-size: 12.500px; letter-spacing: -.4px; color: #fff; }
  .tray { width: 197px; margin-left: 270px; display: flex; align-items: center; }
  .llama { margin-left: 15px; }
  .meet { margin-left: 14px; }
  .cloud { margin-left: 11px; }
  .battery { margin-left: 10px; }
  .wifi { margin-left: 13px; }
  .volume { margin-left: 11px; }
  .clock { width: 103px; display: flex; flex-direction: column; align-items: center; justify-content: center; color: #fff; font-size: 15px; line-height: 23px; letter-spacing: -.45px; padding-bottom: 1px; }
  .notif { position: relative; width: 56px; border-right: 1px solid #777; padding: 15px 0 0 10px; }
  .notif span { position: absolute; left: 19px; top: 25px; width: 20px; height: 20px; border-radius: 50%; border: 1px solid #8d8d8d; background: #232123; color: #fff; font-size: 14px; font-weight: 600; line-height: 18px; text-align: center; }
</style>
